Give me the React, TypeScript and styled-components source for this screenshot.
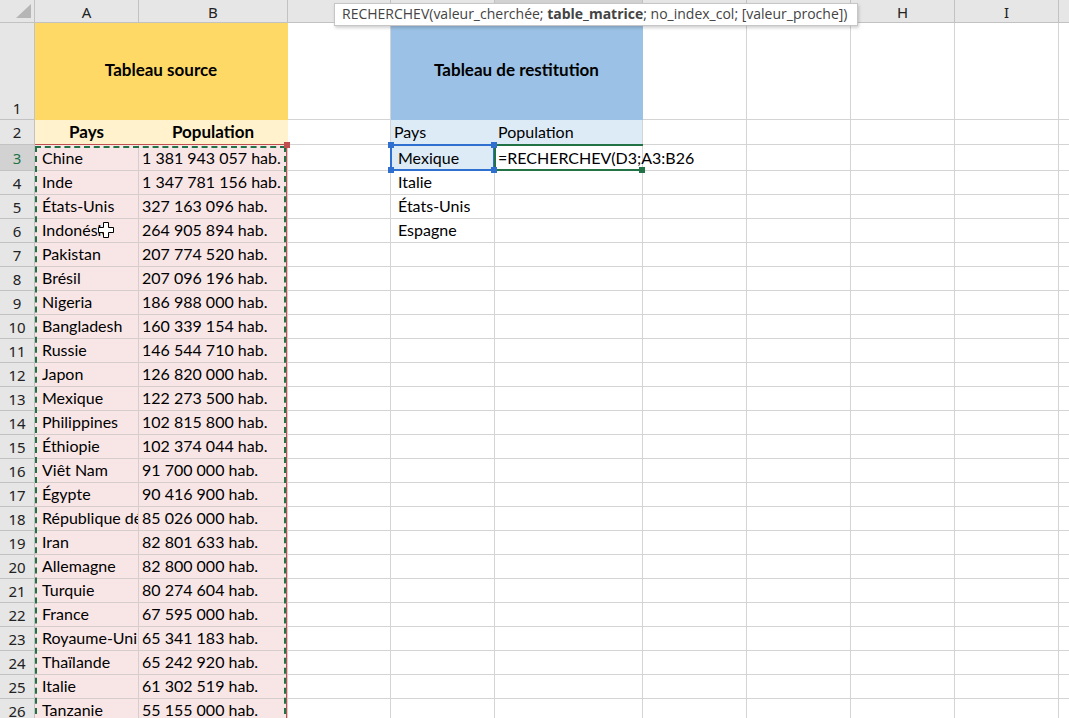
import React from 'react';
import styled, { createGlobalStyle } from 'styled-components';

const GlobalStyle = createGlobalStyle`
  html, body { margin: 0; padding: 0; background: #ffffff; overflow: hidden; }
  #root { width: 1069px; height: 718px; overflow: hidden; }
`;

const COLS = [35, 104, 149, 103, 104, 148, 104, 104, 104, 104, 104];
const GRID = '#d4d4d4';
const PINK_GRID = '#d6cdcd';
const HEAD_LINE = '#c2c2c2';

const Sheet = styled.div`
  position: relative;
  display: grid;
  grid-template-columns: ${COLS.map((c) => `${c}px`).join(' ')};
  grid-template-rows: 23px 97px 25px 26px repeat(23, 24px);
  width: 1069px;
  height: 718px;
  overflow: hidden;
  font-family: Lato, 'Liberation Sans', sans-serif;
  color: #000;
`;

const Corner = styled.div`
  position: relative;
  background: #e6e6e6;
  border-right: 1px solid ${HEAD_LINE};
  border-bottom: 1px solid ${HEAD_LINE};
  svg { position: absolute; left: 15px; top: 4px; }
`;

const ColHead = styled.div<{ $active?: boolean }>`
  background: ${(p) => (p.$active ? '#d2d2d2' : '#e6e6e6')};
  border-right: 1px solid ${HEAD_LINE};
  border-bottom: 1px solid ${HEAD_LINE};
  display: flex;
  align-items: center;
  justify-content: center;
  font-family: 'Noto Sans', 'Open Sans', sans-serif;
  font-size: 15px;
  color: #222;
  padding-top: 1px;
`;

const RowHead = styled.div<{ $active?: boolean; $bottom?: boolean }>`
  background: ${(p) => (p.$active ? '#d2d2d2' : '#e6e6e6')};
  border-right: 1px solid ${HEAD_LINE};
  border-bottom: 1px solid ${HEAD_LINE};
  display: flex;
  align-items: ${(p) => (p.$bottom ? 'flex-end' : 'center')};
  justify-content: center;
  font-family: 'Noto Sans', 'Open Sans', sans-serif;
  font-size: 15px;
  line-height: 22px;
  color: ${(p) => (p.$active ? '#217346' : '#222')};
`;

const Cell = styled.div<{
  $bg?: string;
  $line?: string;
  $hideBottom?: boolean;
  $span?: number;
  $bold?: boolean;
  $center?: boolean;
  $middle?: boolean;
  $indent?: boolean;
  $overflow?: boolean;
}>`
  grid-column: span ${(p) => p.$span ?? 1};
  background: ${(p) => p.$bg ?? '#ffffff'};
  border-right: 1px solid ${(p) => p.$line ?? GRID};
  border-bottom: 1px solid ${(p) => (p.$hideBottom ? 'transparent' : p.$line ?? GRID)};
  display: flex;
  align-items: ${(p) => (p.$middle ? 'center' : 'flex-end')};
  justify-content: ${(p) => (p.$center ? 'center' : 'flex-start')};
  padding: 0 0 2px ${(p) => (p.$center ? 0 : p.$indent ? 7 : 3)}px;
  box-sizing: border-box;
  font-size: ${(p) => (p.$bold ? 17 : 16)}px;
  font-weight: ${(p) => (p.$bold ? 700 : 400)};
  line-height: 20px;
  white-space: nowrap;
  overflow: ${(p) => (p.$overflow ? 'visible' : 'hidden')};
  min-width: 0;
  position: relative;
  z-index: ${(p) => (p.$overflow ? 6 : 'auto')};
`;

const Tooltip = styled.div`
  position: absolute;
  left: 334px;
  top: 3px;
  width: 524px;
  height: 23px;
  box-sizing: border-box;
  background: #ffffff;
  border: 1px solid #c6c6c6;
  box-shadow: 1px 2px 3px rgba(0, 0, 0, 0.18);
  padding-left: 7px;
  font-family: 'Open Sans', 'Noto Sans', sans-serif;
  font-size: 14px;
  line-height: 20px;
  color: #444;
  white-space: nowrap;
  z-index: 10;
  b { font-weight: 700; color: #444; }
`;

const Marquee = styled.div`
  position: absolute;
  left: 35px;
  top: 144px;
  width: 252px;
  height: 600px;
  box-sizing: border-box;
  border-top: 1px solid #c0504d;
  border-right: 1px solid #c0504d;
  z-index: 4;
  &::after {
    content: '';
    position: absolute;
    inset: 1px 0 0 0;
    border: 2px dashed #217346;
  }
`;

const RedHandle = styled.div`
  position: absolute;
  left: 284px;
  top: 142px;
  width: 6px;
  height: 6px;
  background: #c0504d;
  z-index: 6;
`;

const RefBox = styled.div<{ $color: string; $x: number; $w: number; $open?: boolean }>`
  position: absolute;
  left: ${(p) => p.$x}px;
  top: 144px;
  width: ${(p) => p.$w}px;
  height: 27px;
  box-sizing: border-box;
  border: 2px solid ${(p) => p.$color};
  border-right-width: ${(p) => (p.$open ? 0 : 2)}px;
  z-index: 7;
  pointer-events: none;
`;

const Handle = styled.div<{ $color: string; $x: number; $y: number }>`
  position: absolute;
  left: ${(p) => p.$x - 3}px;
  top: ${(p) => p.$y - 3}px;
  width: 6px;
  height: 6px;
  background: ${(p) => p.$color};
  z-index: 8;
`;

const Cursor = styled.svg`
  position: absolute;
  left: 98px;
  top: 222px;
  z-index: 9;
`;

const LETTERS = ['A', 'B', 'C', 'D', 'E', 'F', 'G', 'H', 'I', 'J'];

const DATA: [string, string][] = [
  ['Chine', '1 381 943 057 hab.'],
  ['Inde', '1 347 781 156 hab.'],
  ['États-Unis', '327 163 096 hab.'],
  ['Indonésie', '264 905 894 hab.'],
  ['Pakistan', '207 774 520 hab.'],
  ['Brésil', '207 096 196 hab.'],
  ['Nigeria', '186 988 000 hab.'],
  ['Bangladesh', '160 339 154 hab.'],
  ['Russie', '146 544 710 hab.'],
  ['Japon', '126 820 000 hab.'],
  ['Mexique', '122 273 500 hab.'],
  ['Philippines', '102 815 800 hab.'],
  ['Éthiopie', '102 374 044 hab.'],
  ['Viêt Nam', '91 700 000 hab.'],
  ['Égypte', '90 416 900 hab.'],
  ['République démocratique du Congo', '85 026 000 hab.'],
  ['Iran', '82 801 633 hab.'],
  ['Allemagne', '82 800 000 hab.'],
  ['Turquie', '80 274 604 hab.'],
  ['France', '67 595 000 hab.'],
  ['Royaume-Uni', '65 341 183 hab.'],
  ['Thaïlande', '65 242 920 hab.'],
  ['Italie', '61 302 519 hab.'],
  ['Tanzanie', '55 155 000 hab.'],
];

const LOOKUP = ['Mexique', 'Italie', 'États-Unis', 'Espagne'];

const YELLOW = '#ffd966';
const YELLOW_LIGHT = '#fff2cc';
const BLUE = '#9bc2e6';
const BLUE_LIGHT = '#ddebf7';
const PINK = '#f8e6e6';

function Blanks({ from, row }: { from: number; row: number }) {
  return (
    <>
      {LETTERS.slice(from).map((l) => (
        <Cell key={`${l}${row}`} />
      ))}
    </>
  );
}

export default function App() {
  return (
    <>
      <GlobalStyle />
      <Sheet>
        <Corner>
          <svg width="17" height="15" viewBox="0 0 17 15">
            <path d="M16 0 L16 14 L1 14 Z" fill="#b6b6b6" />
          </svg>
        </Corner>
        {LETTERS.map((l) => (
          <ColHead key={l} $active={l === 'E'}>{l !== 'J' ? l : ''}</ColHead>
        ))}

        <RowHead $bottom>1</RowHead>
        <Cell $span={2} $bg={YELLOW} $hideBottom $line={YELLOW} $bold $center $middle>
          Tableau source
        </Cell>
        <Cell />
        <Cell $span={2} $bg={BLUE} $line={BLUE} $bold $center $middle>
          Tableau de restitution
        </Cell>
        <Blanks from={5} row={1} />

        <RowHead>2</RowHead>
        <Cell $bg={YELLOW_LIGHT} $line={YELLOW_LIGHT} $bold $center>Pays</Cell>
        <Cell $bg={YELLOW_LIGHT} $line={YELLOW_LIGHT} $bold $center>Population</Cell>
        <Cell />
        <Cell $bg={BLUE_LIGHT} $line={BLUE_LIGHT}>Pays</Cell>
        <Cell $bg={BLUE_LIGHT}>Population</Cell>
        <Blanks from={5} row={2} />

        {DATA.map(([country, pop], i) => {
          const row = i + 3;
          const lookup = LOOKUP[i];
          return (
            <React.Fragment key={row}>
              <RowHead $active={row === 3}>{row}</RowHead>
              <Cell $bg={PINK} $line={PINK_GRID} $indent>{country}</Cell>
              <Cell $bg={PINK} $line={PINK_GRID}>{pop}</Cell>
              <Cell />
              <Cell $bg={row === 3 ? BLUE_LIGHT : undefined} $indent>{lookup ?? ''}</Cell>
              <Cell $overflow={row === 3}>{row === 3 ? '=RECHERCHEV(D3;A3:B26' : ''}</Cell>
              <Blanks from={5} row={row} />
            </React.Fragment>
          );
        })}

        <Tooltip>
          RECHERCHEV(valeur_cherchée; <b>table_matrice</b>; no_index_col; [valeur_proche])
        </Tooltip>

        <Marquee />
        <RedHandle />

        <RefBox $color="#2f6fd0" $x={390} $w={105} />
        <RefBox $color="#217346" $x={494} $w={149} $open />
        <Handle $color="#2f6fd0" $x={391} $y={145} />
        <Handle $color="#2f6fd0" $x={494} $y={145} />
        <Handle $color="#2f6fd0" $x={391} $y={170} />
        <Handle $color="#2f6fd0" $x={494} $y={170} />
        <Handle $color="#217346" $x={642} $y={170} />

        <Cursor width="16" height="16" viewBox="0 0 16 16">
          <path
            d="M5.5 0.5 H10.5 V5.5 H15.5 V10.5 H10.5 V15.5 H5.5 V10.5 H0.5 V5.5 H5.5 Z"
            fill="#ffffff"
            stroke="#000000"
            strokeWidth="1"
          />
        </Cursor>
      </Sheet>
    </>
  );
}
